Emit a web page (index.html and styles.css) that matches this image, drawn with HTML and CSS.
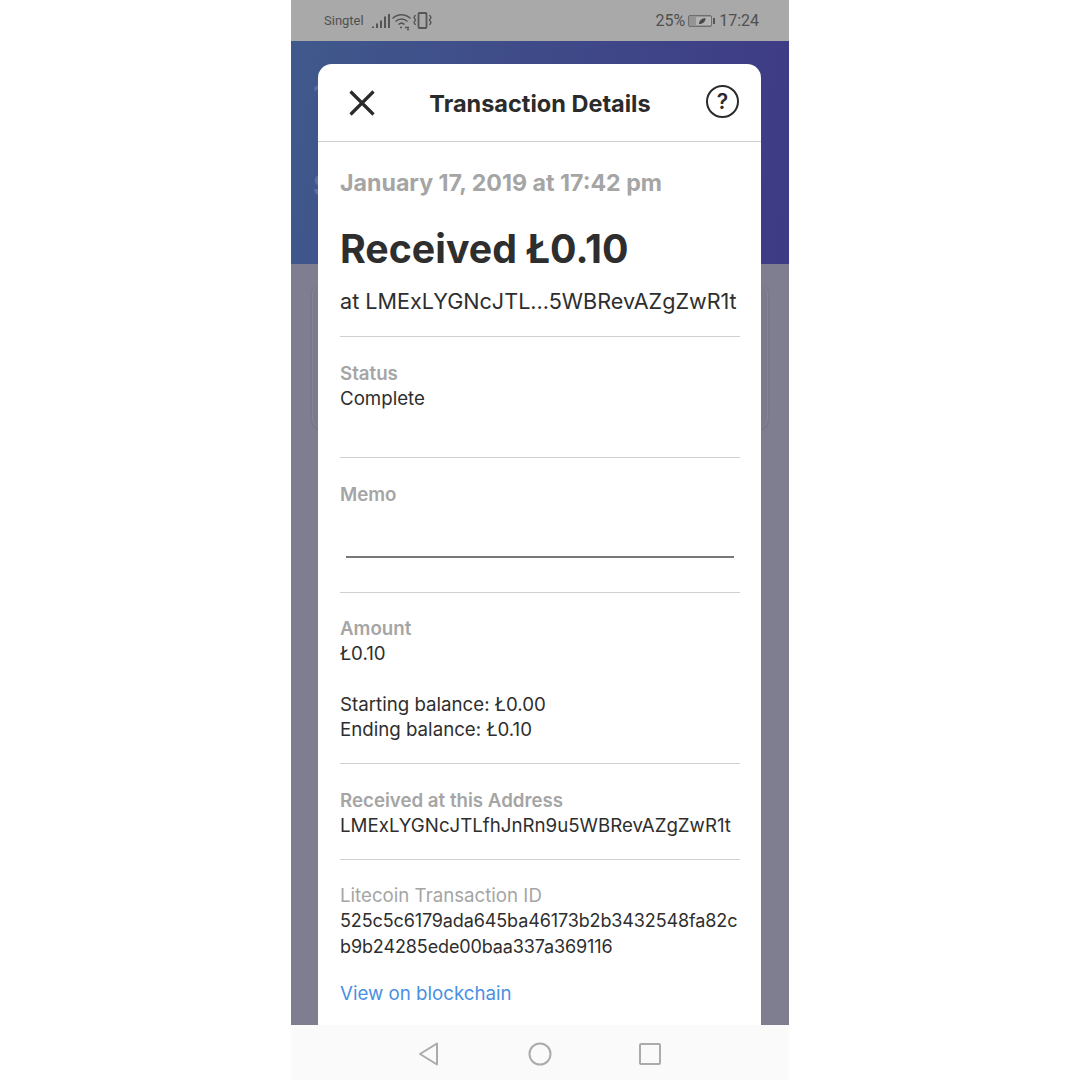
FILE: index.html
```html
<!DOCTYPE html>
<html lang="en">

<head>
    <meta charset="UTF-8">
    <meta name="viewport" content="width=device-width, initial-scale=1.0">
    <title>Transaction Details</title>
    <link rel="stylesheet" href="styles.css">
</head>

<body>
    <div class="phone">
        <div class="status-bar">
            <div class="status-left">
                <span class="carrier">Singtel</span>
                <svg class="status-icons" width="62" height="20" viewBox="0 0 62 20" fill="none" stroke="#555">
                    <!-- signal -->
                    <path d="M1 15.500v1.500M5 12.500v4.500M9 9.500v7.500M13 5.500v11.500M17 3v14" stroke-width="2"/>
                    <!-- wifi -->
                    <path d="M20.500 7.500c5-5 13-5 18 0M23.500 10.500c3.500-3.300 8.500-3.300 12 0M26.500 13.500c2-1.800 4-1.800 6 0" stroke-width="1.500"/>
                    <path d="M28 16.500h2M33 16.500h4M35 18.500h2" stroke-width="1.400"/>
                    <!-- vibrate -->
                    <rect x="46.500" y="2" width="8" height="15" rx="1" stroke-width="1.800"/>
                    <path d="M43.500 4l-1.500 2.500 1.500 2.500-1.500 2.500 1.500 2.500M57.500 4l1.500 2.500-1.500 2.500 1.500 2.500-1.500 2.500" stroke-width="1.400"/>
                </svg>
            </div>
            <div class="status-right">
                <span>25%</span>
                <svg width="28" height="14" viewBox="0 0 28 14">
                    <rect x="0.500" y="1.500" width="23" height="11" rx="1.500" fill="#949494" stroke="#6e6e6e"/>
                    <rect x="8" y="3" width="15" height="8" fill="#b4b4b4"/>
                    <path d="M11 10c0-4 3-5.500 6.500-6 0 3.500-2 6-6.500 6z" fill="#4a4a4a"/>
                    <rect x="25" y="4" width="2" height="6" fill="#555"/>
                </svg>
                <span>17:24</span>
            </div>
        </div>

        <div class="screen">
            <div class="screen-top">
                <span class="ghost">1</span>
                <span class="ghost">$</span>
            </div>
            <div class="screen-body">
                <div class="ghost-card"></div>
            </div>

            <div class="modal">
                <div class="modal-header">
                    <svg width="30" height="30" viewBox="0 0 30 30" fill="none" stroke="#2b2b2b" stroke-width="3.200">
                        <path d="M3.500 3.500l23 23M26.500 3.500l-23 23"/>
                    </svg>
                    <h1>Transaction Details</h1>
                    <div class="help">?</div>
                </div>

                <div class="modal-content">
                    <div class="summary">
                        <div class="date">January 17, 2019 at 17:42 pm</div>
                        <h2>Received Ł0.10</h2>
                        <div class="text short-address">at LMExLYGNcJTL...5WBRevAZgZwR1t</div>
                    </div>

                    <div class="section status">
                        <div class="label">Status</div>
                        <div class="text">Complete</div>
                    </div>

                    <div class="section memo">
                        <div class="label">Memo</div>
                        <div class="memo-line"></div>
                    </div>

                    <div class="section amount">
                        <div class="label">Amount</div>
                        <div class="text">Ł0.10</div>
                        <div class="text balance">Starting balance: Ł0.00</div>
                        <div class="text">Ending balance: Ł0.10</div>
                    </div>

                    <div class="section address">
                        <div class="label">Received at this Address</div>
                        <div class="text">LMExLYGNcJTLfhJnRn9u5WBRevAZgZwR1t</div>
                    </div>

                    <div class="section last">
                        <div class="label light">Litecoin Transaction ID</div>
                        <div class="text hash">525c5c6179ada645ba46173b2b3432548fa82c<br>b9b24285ede00baa337a369116</div>
                        <a class="link" href="#">View on blockchain</a>
                    </div>
                </div>
            </div>
        </div>

        <div class="nav-bar">
            <svg width="24" height="26" viewBox="0 0 24 26" fill="none" stroke="#ababab" stroke-width="2">
                <path d="M20 2.500v21L3 13z" stroke-linejoin="round"/>
            </svg>
            <svg width="24" height="24" viewBox="0 0 24 24" fill="none" stroke="#ababab" stroke-width="2">
                <circle cx="12" cy="12" r="10.500"/>
            </svg>
            <svg width="22" height="22" viewBox="0 0 22 22" fill="none" stroke="#ababab" stroke-width="2">
                <rect x="1" y="1" width="20" height="20" rx="1"/>
            </svg>
        </div>
    </div>
</body>

</html>
```

FILE: styles.css
```css
html,
body {
    height: 100%;
}

body {
    font-family: "Inter", "Liberation Sans", sans-serif;
    background-color: #fff;
    margin: 0;
    padding: 0;
    color: #2e2e2e;
}

.phone {
    width: 498px;
    height: 1080px;
    margin: 0 auto;
    display: flex;
    flex-direction: column;
}

.status-bar {
    height: 41px;
    background-color: #a9a9a9;
    color: #505050;
    display: flex;
    align-items: center;
    justify-content: space-between;
    padding: 0 30px 0 33px;
    flex-shrink: 0;
}

.status-left {
    display: flex;
    align-items: center;
    gap: 8px;
}

.carrier {
    font-family: "Roboto", sans-serif;
    font-size: 13px;
}

.status-right {
    display: flex;
    align-items: center;
    gap: 3px;
    font-family: "Roboto", sans-serif;
    font-size: 16px;
}

.screen {
    position: relative;
    flex: 1;
    display: flex;
    flex-direction: column;
    overflow: hidden;
}

.screen-top {
    height: 223px;
    background: linear-gradient(100deg, #40598c 0%, #3e3a85 100%);
    display: flex;
    flex-direction: column;
    gap: 54px;
    padding: 36px 0 0 22px;
    box-sizing: border-box;
}

.ghost {
    font-size: 30px;
    line-height: 36px;
    font-weight: 700;
    color: #5f6f9c;
}

.screen-body {
    flex: 1;
    background-color: #7f7e90;
    padding: 21px 21px 0;
}

.ghost-card {
    height: 143px;
    box-sizing: border-box;
    background-color: #7c7b8d;
    border: 1px solid #858494;
    border-radius: 8px;
    box-shadow: 0 1px 3px rgba(60, 60, 70, 0.25);
}

.modal {
    position: absolute;
    left: 27px;
    right: 28px;
    top: 23px;
    bottom: 0;
    background-color: #fff;
    border-radius: 14px 14px 0 0;
}

.modal-header {
    height: 77px;
    border-bottom: 1px solid #cfcfd3;
    display: flex;
    align-items: center;
    justify-content: space-between;
    padding: 0 22px 0 29px;
}

.modal-header h1 {
    font-size: 23.500px;
    font-weight: 700;
    margin: 2px 3px 0 0;
    color: #2b2b2b;
}

.help {
    width: 33px;
    height: 33px;
    box-sizing: border-box;
    margin-top: -2px;
    border: 2px solid #2b2b2b;
    border-radius: 50%;
    display: flex;
    align-items: center;
    justify-content: center;
    font-size: 21px;
    font-weight: 600;
    color: #2b2b2b;
}

.modal-content {
    padding: 0 21px 0 22px;
}

.summary {
    height: 195px;
    padding-top: 27px;
    box-sizing: border-box;
    border-bottom: 1px solid #cfcfd3;
}

.date {
    font-size: 23.200px;
    line-height: 29px;
    font-weight: 700;
    color: #a5a5a5;
}

.summary h2 {
    font-size: 39.300px;
    line-height: 48px;
    font-weight: 700;
    margin: 27px 0 0;
    color: #2e2e2e;
}

.section {
    border-bottom: 1px solid #cfcfd3;
    box-sizing: border-box;
    padding-top: 24px;
}

.section.status {
    height: 121px;
}

.section.memo {
    height: 135px;
}

.section.amount {
    height: 171px;
    padding-top: 23px;
}

.section.address {
    height: 96px;
}

.section.last {
    border-bottom: none;
    padding-top: 23px;
}

.label {
    font-size: 18.700px;
    line-height: 25px;
    font-weight: 600;
    color: #a5a5a5;
}

.label.light {
    font-weight: 400;
}

.text {
    font-size: 18.700px;
    line-height: 25.500px;
    color: #2e2e2e;
}

.text.short-address {
    font-size: 21.600px;
    margin-top: 16px;
}

.text.hash {
    font-size: 18px;
    letter-spacing: -0.120px;
}

.balance {
    margin-top: 25px;
}

.memo-line {
    height: 1.500px;
    background-color: #777;
    margin: 49px 6px 0;
}

.link {
    display: block;
    margin-top: 22px;
    font-size: 18.700px;
    line-height: 26px;
    color: #4a90e2;
    text-decoration: none;
}

.nav-bar {
    height: 55px;
    background-color: #fafafa;
    display: flex;
    align-items: center;
    justify-content: center;
    gap: 87px;
    flex-shrink: 0;
    padding: 2px 2px 0 0;
    box-sizing: border-box;
}
```
